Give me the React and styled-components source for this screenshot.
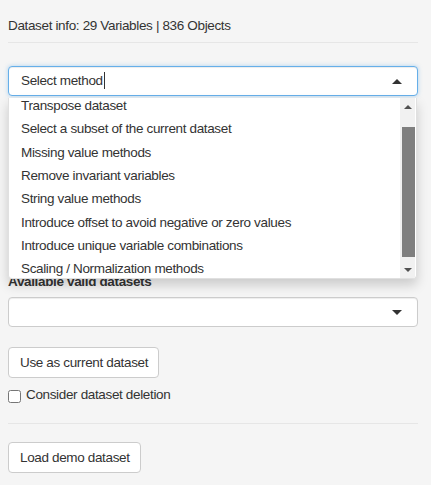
import { createGlobalStyle, styled } from "styled-components";

const GlobalStyle = createGlobalStyle`
  html, body {
    margin: 0;
    padding: 0;
    background: #f5f5f5;
  }
  body {
    font-family: "Liberation Sans", Arial, sans-serif;
    font-size: 13.5px;
    letter-spacing: -0.35px;
    color: #333;
  }
`;

const methods = [
  "Transpose dataset",
  "Select a subset of the current dataset",
  "Missing value methods",
  "Remove invariant variables",
  "String value methods",
  "Introduce offset to avoid negative or zero values",
  "Introduce unique variable combinations",
  "Scaling / Normalization methods",
];

function Caret({ up }) {
  return (
    <CaretIcon viewBox="0 0 10 5" width="10" height="5">
      <path d={up ? "M0 5 L5 0 L10 5 Z" : "M0 0 L10 0 L5 5 Z"} fill="#333" />
    </CaretIcon>
  );
}

function ScrollArrow({ up }) {
  return (
    <svg viewBox="0 0 8 4" width="8" height="4">
      <path d={up ? "M0 4 L4 0 L8 4 Z" : "M0 0 L8 0 L4 4 Z"} fill="#505050" />
    </svg>
  );
}

export default function App() {
  return (
    <>
      <GlobalStyle />
      <Panel>
        <Info>Dataset info: 29 Variables | 836 Objects</Info>
        <Rule />
        <SelectWrap>
          <SelectBox $focused>
            <span>
              Select method
              <Cursor />
            </span>
            <Caret up />
          </SelectBox>
          <Dropdown>
            <Options>
              <OptionList>
                {methods.map((m) => (
                  <Option key={m}>{m}</Option>
                ))}
              </OptionList>
            </Options>
            <Scrollbar>
              <ArrowBtn>
                <ScrollArrow up />
              </ArrowBtn>
              <Track>
                <Thumb />
              </Track>
              <ArrowBtn>
                <ScrollArrow />
              </ArrowBtn>
            </Scrollbar>
          </Dropdown>
        </SelectWrap>
        <HiddenArea />
        <Label>Available valid datasets</Label>
        <SelectBox>
          <span />
          <Caret />
        </SelectBox>
        <Button $top={20}>Use as current dataset</Button>
        <CheckRow>
          <CheckBox type="checkbox" />
          <span>Consider dataset deletion</span>
        </CheckRow>
        <Rule $top={18} />
        <Button $top={18}>Load demo dataset</Button>
      </Panel>
    </>
  );
}

const Panel = styled.div`
  padding: 16px 13px 20px 8px;
  display: flex;
  flex-direction: column;
  align-items: flex-start;
`;

const Info = styled.div`
  line-height: 20px;
`;

const Rule = styled.div`
  align-self: stretch;
  height: 1px;
  background: #e6e6e6;
  margin-top: ${(p) => p.$top ?? 6}px;
`;

const SelectWrap = styled.div`
  position: relative;
  align-self: stretch;
  margin-top: 23px;
`;

const SelectBox = styled.div`
  align-self: stretch;
  box-sizing: border-box;
  height: 30px;
  display: flex;
  align-items: center;
  justify-content: space-between;
  padding: 0 15px 0 12px;
  background: #fff;
  border: 1px solid ${(p) => (p.$focused ? "#66afe9" : "#ccc")};
  border-radius: 4px;
  box-shadow: ${(p) =>
    p.$focused
      ? "inset 0 1px 1px rgba(0,0,0,.075), 0 0 4px rgba(102,175,233,.5)"
      : "inset 0 1px 1px rgba(0,0,0,.075)"};
  line-height: 20px;
  color: #333;
`;

const Cursor = styled.span`
  display: inline-block;
  width: 1px;
  height: 17px;
  margin-left: 1px;
  background: #333;
  vertical-align: -4px;
`;

const CaretIcon = styled.svg`
  display: block;
`;

const Dropdown = styled.div`
  position: absolute;
  top: 32px;
  left: 0;
  right: 1px;
  height: 181px;
  box-sizing: border-box;
  display: flex;
  background: #fff;
  border: 1px solid #e0e0e0;
  border-top: none;
  border-radius: 0 0 4px 4px;
  box-shadow: 0 6px 12px rgba(0, 0, 0, 0.175);
  overflow: hidden;
  z-index: 10;
`;

const Options = styled.div`
  flex: 1;
  overflow: hidden;
`;

const OptionList = styled.div`
  margin-top: -4px;
`;

const Option = styled.div`
  padding: 0 12px;
  line-height: 23.35px;
  white-space: nowrap;
  color: #333;
`;

const Scrollbar = styled.div`
  width: 15px;
  margin-right: 1px;
  background: #f1f1f1;
  display: flex;
  flex-direction: column;
`;

const ArrowBtn = styled.div`
  height: 17px;
  display: flex;
  align-items: center;
  justify-content: center;
`;

const Track = styled.div`
  flex: 1;
  display: flex;
  flex-direction: column;
  justify-content: flex-end;
  padding: 12px 0 4px 2px;
`;

const Thumb = styled.div`
  height: 130px;
  background: #7f7f7f;
`;

const HiddenArea = styled.div`
  height: 176px;
`;

const Label = styled.div`
  font-weight: bold;
  line-height: 20px;
  margin-bottom: 5px;
`;

const Button = styled.button`
  margin-top: ${(p) => p.$top}px;
  height: 31px;
  padding: 0 10px 0 11px;
  font-family: inherit;
  font-size: inherit;
  letter-spacing: inherit;
  color: #333;
  background: #fff;
  border: 1px solid #ccc;
  border-radius: 4px;
`;

const CheckRow = styled.label`
  display: flex;
  align-items: center;
  gap: 5px;
  margin-top: 7px;
  line-height: 20px;
`;

const CheckBox = styled.input`
  margin: 2px 0 0 0;
  width: 13px;
  height: 13px;
`;
